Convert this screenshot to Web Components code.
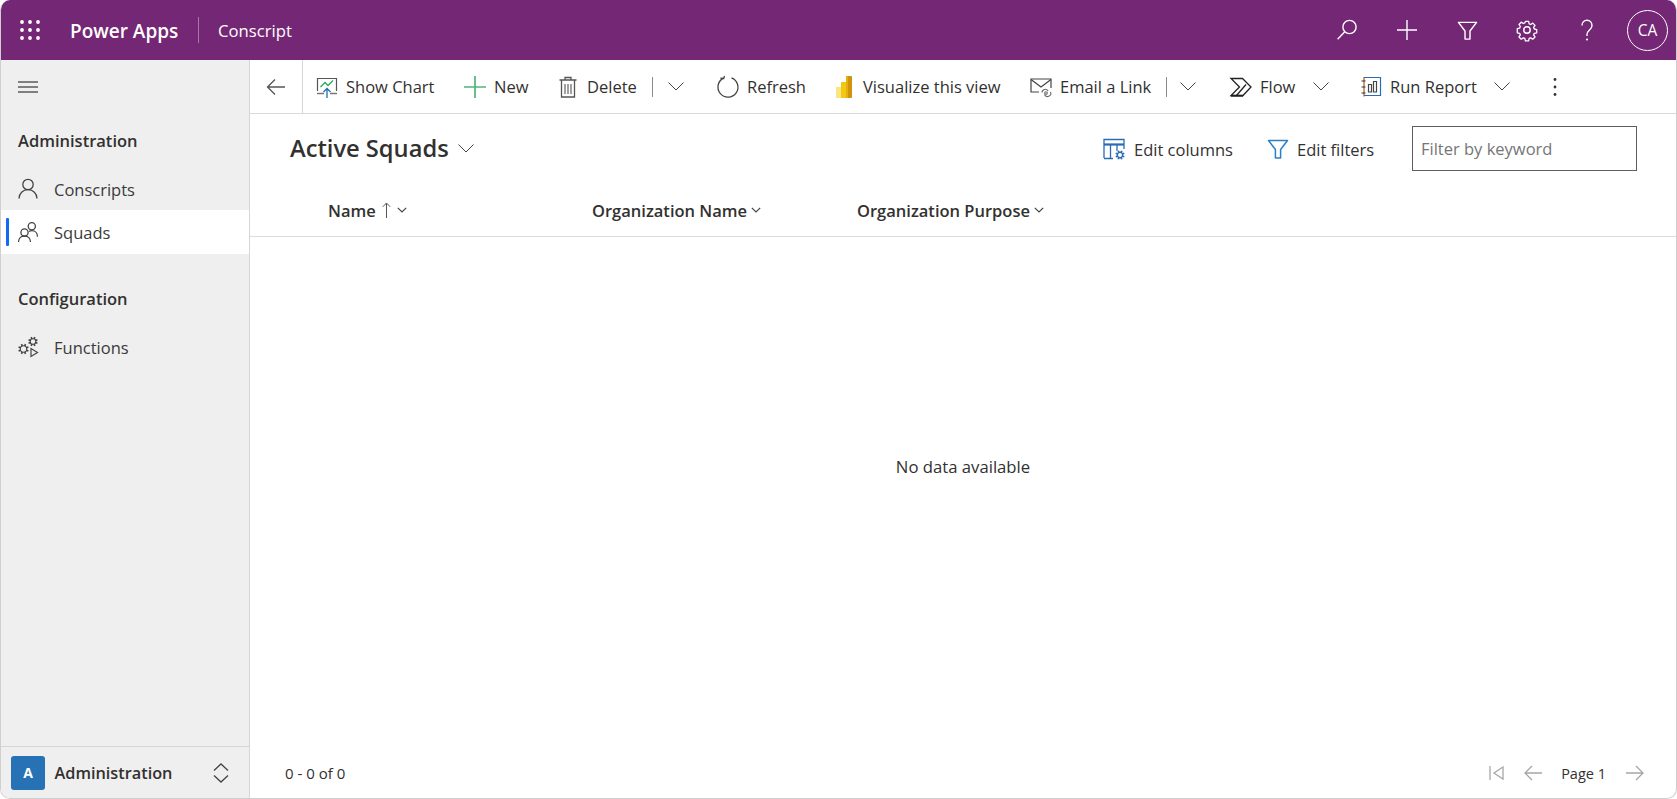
<!DOCTYPE html>
<html lang="en"><head><meta charset="utf-8"><title>Power Apps</title>
<style>
html,body{margin:0;padding:0;background:#fff;height:100%;overflow:hidden}
body{font-family:"Open Sans","Noto Sans",sans-serif;color:#323130}
</style></head><body>
<app-shell>
  <top-bar slot="top" brand="Power Apps" app="Conscript"></top-bar>
  <side-nav slot="side">
    <nav-group label="Administration" style="--gap-top:18px">
      <nav-item icon="person">Conscripts</nav-item>
      <nav-item icon="people" active>Squads</nav-item>
    </nav-group>
    <nav-group label="Configuration" style="--gap-top:34px">
      <nav-item icon="functions">Functions</nav-item>
    </nav-group>
  </side-nav>
  <cmd-bar slot="main">
    <cmd-btn icon="chart" w="149" pl="13">Show Chart</cmd-btn>
    <cmd-btn icon="plus" w="93">New</cmd-btn>
    <cmd-btn icon="trash" w="160" split="32" pr="21">Delete</cmd-btn>
    <cmd-btn icon="refresh" w="116">Refresh</cmd-btn>
    <cmd-btn icon="powerbi" w="197">Visualize this view</cmd-btn>
    <cmd-btn icon="email" w="200" split="30" pr="22">Email a Link</cmd-btn>
    <cmd-btn icon="flow" w="130" chev pr="19">Flow</cmd-btn>
    <cmd-btn icon="report" w="182" chev pr="20">Run Report</cmd-btn>
    <cmd-btn icon="dots" w="50" pl="14"></cmd-btn>
  </cmd-bar>
  <view-header slot="main" title="Active Squads"></view-header>
  <grid-head slot="main">
    <col-head w="264" sort>Name</col-head>
    <col-head w="265">Organization Name</col-head>
    <col-head w="260">Organization Purpose</col-head>
  </grid-head>
  <grid-body slot="main">No data available</grid-body>
  <grid-foot slot="main" range="0 - 0 of 0" page="Page 1"></grid-foot>
</app-shell>
<script>
function gear(cx,cy,r,R,n,sw){
  let t='';for(let i=0;i<n;i++){const a=(i+.5)*2*Math.PI/n,c=Math.cos(a),s=Math.sin(a);
    t+=`M${(cx+r*c).toFixed(2)} ${(cy+r*s).toFixed(2)}L${(cx+R*c).toFixed(2)} ${(cy+R*s).toFixed(2)}`}
  return `<circle cx="${cx}" cy="${cy}" r="${r}" fill="none" stroke="currentColor" stroke-width="${sw}"/><path d="${t}" stroke="currentColor" stroke-width="${sw*1.5}" fill="none"/>`;
}
const ICONS={
waffle:[20,20,'<g fill="currentColor">'+[2,10,18].flatMap(y=>[2,10,18].map(x=>`<circle cx="${x}" cy="${y}" r="1.9"/>`)).join('')+'</g>'],
search:[22,22,'<g fill="none" stroke="currentColor" stroke-width="1.4"><circle cx="13.5" cy="8" r="6.6"/><path d="M8.8 12.8 1.6 20.2"/></g>'],
add:[22,22,'<path d="M11 1v20M1 11h20" stroke="currentColor" stroke-width="1.4" fill="none"/>'],
funnel:[22,22,'<path d="M1.5 2.5h19L13.6 11.5v8.5H8.4v-8.5z" fill="none" stroke="currentColor" stroke-width="1.5" stroke-linejoin="round"/>'],
gear:[22,22,'<g fill="none" stroke="currentColor" stroke-width="1.45" stroke-linejoin="round"><circle cx="11" cy="11" r="3.2"/><path d="M9.2 1.5h3.6l.6 2.7 1.7.7 2.3-1.5 2.5 2.5-1.5 2.3.7 1.7 2.7.6v3.6l-2.7.6-.7 1.7 1.5 2.3-2.5 2.5-2.3-1.5-1.7.7-.6 2.7H9.2l-.6-2.7-1.7-.7-2.3 1.5-2.5-2.5 1.5-2.3-.7-1.7-2.7-.6V9.400l2.700-.6.7-1.700-1.500-2.300 2.500-2.500 2.300 1.500 1.700-.7z" transform="translate(1.1 1.1) scale(.9)"/></g>'],
help:[22,22,'<g fill="none" stroke="currentColor" stroke-width="1.4"><path d="M6 6.500C6 3.500 8.200 1.200 11 1.200s5 2.300 5 5.300c0 4.500-5 4.500-5 9v1.500"/></g><circle cx="11" cy="20.500" r="1.100" fill="currentColor"/>'],
menu:[20,12,'<path d="M0 1h20M0 6h20M0 11h20" stroke="#111" stroke-width="1"/>'],
back:[20,20,'<path d="M19 10H1.500M9 2.500 1.500 10 9 17.500" fill="none" stroke="#555" stroke-width="1.300"/>'],
chart:[22,22,'<path d="M1.500 15V2.500h19V15" fill="none" stroke="#555" stroke-width="1.200"/><path d="M1 17.500h7M14 17.500h7" stroke="#777" stroke-width="1.600"/><path d="M4.500 11 9 6.500l3 3 5-5" fill="none" stroke="#2fa55a" stroke-width="1.300"/><path d="M11 22v-9M7.500 16 11 12.500l3.500 3.500" fill="none" stroke="#1f6fb5" stroke-width="1.300"/>'],
plus:[22,22,'<path d="M11 0v22M0 11h22" stroke="#4fb57b" stroke-width="1.700"/>'],
trash:[22,22,'<g fill="none" stroke="#555" stroke-width="1.300"><path d="M4.500 4.500V21h13V4.500M2.500 4h17M8 4V1.500h6V4"/><path d="M8 8v10M11 8v10M14 8v10" stroke-width="1.100"/></g>'],
refresh:[22,22,'<g fill="none" stroke="#444" stroke-width="1.300"><path d="M14.500 1.800a10 10 0 1 1-8 .4"/><path d="M7.500 0l-.8 2.500-3.300-.3"/></g>'],
powerbi:[22,22,'<rect x="3" y="11" width="6" height="11" fill="#f9e583"/><rect x="8" y="6" width="6" height="16" fill="#f2c811"/><rect x="13" y="0" width="6" height="22" rx="1" fill="#d1930c"/><rect x="13" y="0" width="2" height="22" fill="#e8ae16"/>'],
email:[22,22,'<g fill="none" stroke="#444" stroke-width="1.200"><path d="M9 16H1V3h20v9"/><path d="M1 3.500l10 7.500 10-7.500"/></g><g fill="none" stroke="#666" stroke-width="1.100"><path d="M12 16.500a3.200 3.200 0 0 1 6-1.500"/><path d="M20.500 16a3.200 3.200 0 0 1-6 2.500"/><circle cx="16" cy="17" r="1.300"/></g>'],
flow:[22,22,'<g fill="none" stroke="#222" stroke-width="1.300" stroke-linejoin="miter"><path d="M1 2.500h11.500l8.500 8.500-8 8.500H1L9.500 11z"/><path d="M6.500 19.500 16 8.500"/></g><path d="M1 19.800h12" stroke="#222" stroke-width="1.800"/>'],
report:[22,22,'<path d="M4 1.500h16.500v18H4" fill="none" stroke="#2a6cb4" stroke-width="1.200"/><path d="M4 1v19.500" stroke="#a85a24" stroke-width="1.200"/><path d="M1.500 5h4M1.500 11h4M1.500 17h4" stroke="#333" stroke-width="1.200"/><path d="M8.500 8.500h3V16h-3zM13.500 5.500h3V16h-3z" fill="none" stroke="#444" stroke-width="1.200"/>'],
dots:[22,22,'<g fill="#333"><circle cx="11" cy="3.500" r="1.400"/><circle cx="11" cy="11" r="1.400"/><circle cx="11" cy="18.500" r="1.400"/></g>'],
cols:[22,22,'<g fill="none" stroke="#2a6cb4" stroke-width="1.300"><path d="M1 20V1.500h20V11"/><path d="M1 6.500h20" stroke-width="2.200"/><path d="M7.500 6.500V20M14 6.500V13M1 20.500h9"/></g><g color="#2a6cb4">'+gear(17,17,2.6,4.6,8,1.2)+'</g>'],
funnelblue:[22,22,'<path d="M1.500 2.500h19L13.600 11.500v8.500H8.400v-8.500z" fill="none" stroke="#2d7fc4" stroke-width="1.500" stroke-linejoin="round"/>'],
person:[22,22,'<g fill="none" stroke="#444" stroke-width="1.300"><circle cx="11" cy="6.500" r="5.200"/><path d="M2 20.500c0-5 4-8.800 9-8.800s9 3.800 9 8.800"/></g>'],
people:[22,22,'<g fill="none" stroke="#444" stroke-width="1.300"><circle cx="7.500" cy="11.500" r="3.600"/><path d="M1.500 21c0-3.500 2.500-6 6-6s6 2.500 6 6"/><circle cx="14.800" cy="5.200" r="3.600"/><path d="M12 10.600c.9-.7 1.800-.9 2.800-.9 3.500 0 5.700 2.500 5.700 6"/></g>'],
functions:[22,22,'<g color="#444">'+gear(6.5,13,3.2,5.3,8,1.1)+gear(16,5.5,2.8,4.8,8,1.1)+'</g><path d="M14 12.500v8l6.500-4z" fill="none" stroke="#444" stroke-width="1.200"/>'],
updown:[18,22,'<path d="M2 8.500 9 2l7 6.500M2 13.500 9 20l7-6.500" fill="none" stroke="#444" stroke-width="1.300"/>'],
chev:[16,9,'<path d="M.5 .5 8 8 15.500 .5" fill="none" stroke="#444" stroke-width="1"/>'],
chevsm:[10,6,'<path d="M.8 .8 5 5 9.200 .8" fill="none" stroke="#444" stroke-width="1.200"/>'],
sortup:[9,16,'<path d="M4.500 16V1M.8 4.800 4.500 1l3.700 3.800" fill="none" stroke="#555" stroke-width="1"/>'],
first:[15,14,'<path d="M1 0v14M14 1 5 7l9 6z" fill="none" stroke="#a6a6a6" stroke-width="1.300"/>'],
prev:[18,16,'<path d="M18 8H1M8 1 1 8l7 7" fill="none" stroke="#a6a6a6" stroke-width="1.300"/>'],
next:[18,16,'<path d="M0 8h17M10 1l7 7-7 7" fill="none" stroke="#a6a6a6" stroke-width="1.300"/>'],
};
function shadow(el,html){const s=el.shadowRoot||el.attachShadow({mode:'open'});s.innerHTML=html;return s}
class PaIcon extends HTMLElement{connectedCallback(){
  const [w,h,b]=ICONS[this.getAttribute('name')];const sc=+(this.getAttribute('size')||0);
  const W=sc||w,H=sc?sc*h/w:h;
  shadow(this,`<style>:host{display:inline-flex;align-items:center;justify-content:center;flex:none;line-height:0}svg{display:block;overflow:visible}</style><svg width="${W}" height="${H}" viewBox="0 0 ${w} ${h}" aria-hidden="true">${b}</svg>`)}}
customElements.define('pa-icon',PaIcon);

class AppShell extends HTMLElement{connectedCallback(){shadow(this,`<style>
:host{display:grid;grid-template-columns:249px 1fr;grid-template-rows:60px 1fr;width:1677px;height:799px;box-sizing:border-box;border:1px solid #cfcfcf;border-top:0;border-radius:10px;overflow:hidden;background:#fff}
::slotted([slot=top]){grid-column:1/3}
.main{display:flex;flex-direction:column;min-width:0;min-height:0}
</style><slot name="top"></slot><slot name="side"></slot><div class="main"><slot name="main"></slot></div>`)}}
class TopBar extends HTMLElement{connectedCallback(){shadow(this,`<style>
:host{display:flex;align-items:center;height:60px;margin-right:-1px;margin-left:-1px;background:#742774;color:#fff;padding-left:20px;box-sizing:border-box}
.brand{margin:2px 0 0 30px;font-size:19px;font-weight:600;width:129px;white-space:nowrap}
.app{border-left:1px solid #a57ba5;height:26px;line-height:28px;padding-left:19px;font-size:16.700px;margin-left:-1px;flex:1}
.act{width:60px;display:flex;justify-content:center}
.avatar{width:41px;height:41px;margin:0 9px 0 10px;border:1px solid #fff;border-radius:50%;box-sizing:border-box;display:flex;align-items:center;justify-content:center;font-size:15.500px}
</style><pa-icon name="waffle"></pa-icon><span class="brand">${this.getAttribute('brand')}</span><span class="app">${this.getAttribute('app')}</span>
<span class="act"><pa-icon name="search"></pa-icon></span><span class="act"><pa-icon name="add"></pa-icon></span><span class="act"><pa-icon name="funnel" size="21"></pa-icon></span><span class="act"><pa-icon name="gear" size="22"></pa-icon></span><span class="act"><pa-icon name="help" size="22"></pa-icon></span><span class="avatar">CA</span>`)}}
class SideNav extends HTMLElement{connectedCallback(){shadow(this,`<style>
:host{display:flex;flex-direction:column;background:#efefef;border-right:1px solid #d6d6d6;box-sizing:border-box;min-height:0}
.burger{height:52px;display:flex;align-items:center;padding:1px 0 0 17px;flex:none;box-sizing:border-box}
.list{flex:1}
.sw{height:52px;border-top:1px solid #d6d6d6;display:flex;align-items:center;padding:0 19px 0 10px;flex:none;box-sizing:border-box}
.tile{width:34px;height:34px;border-radius:3px;background:#2672b5;color:#fff;display:flex;align-items:center;justify-content:center;font-size:14px;font-weight:700;flex:none}
.name{flex:1;margin-left:9.500px;font-size:16.300px;font-weight:600;white-space:nowrap}
</style><div class="burger"><pa-icon name="menu"></pa-icon></div><div class="list"><slot></slot></div>
<div class="sw"><span class="tile">A</span><span class="name">Administration</span><pa-icon name="updown"></pa-icon></div>`)}}
class NavGroup extends HTMLElement{connectedCallback(){shadow(this,`<style>
:host{display:block;padding-top:var(--gap-top,0)}
h2{margin:0 0 18px;padding-left:17px;font-size:16.500px;font-weight:600;line-height:22px;color:#323130}
</style><h2>${this.getAttribute('label')}</h2><slot></slot>`)}}
class NavItem extends HTMLElement{connectedCallback(){shadow(this,`<style>
:host{display:flex;align-items:center;height:${this.hasAttribute('active')?44:40}px;padding:0 0 ${this.hasAttribute('active')?0:2}px 16px;font-size:16.500px;position:relative;color:#3b3a39;box-sizing:border-box}
:host([active]){background:#fff}
:host([active])::before{content:"";position:absolute;left:5px;top:8px;bottom:8px;width:3px;border-radius:1px;background:#0f6cf2}
.t{margin-left:15px}
</style><pa-icon name="${this.getAttribute('icon')}"></pa-icon><span class="t"><slot></slot></span>`)}}
class CmdBar extends HTMLElement{connectedCallback(){shadow(this,`<style>
:host{display:flex;align-items:center;height:53px;flex:none;border-bottom:1px solid #d9d9d9;box-sizing:content-box}
.back{width:53px;height:53px;border-right:1px solid #d6d6d6;display:flex;align-items:center;justify-content:center;box-sizing:border-box;flex:none}
</style><div class="back"><pa-icon name="back"></pa-icon></div><slot></slot>`)}}
class CmdBtn extends HTMLElement{connectedCallback(){
  const a=n=>this.getAttribute(n),split=a('split'),chev=this.hasAttribute('chev');
  shadow(this,`<style>
:host{display:flex;align-items:center;height:53px;width:${a('w')}px;flex:none;box-sizing:border-box;padding-left:${a('pl')||12}px;padding-right:${a('pr')||0}px;font-size:16.500px;color:#323130;white-space:nowrap}
.ic{margin-right:8px}
.tail{margin-left:auto;display:flex;align-items:center;justify-content:space-between}
.sep{width:1px;height:20px;background:#8a8a8a;flex:none}
</style><pa-icon class="ic" name="${a('icon')}"></pa-icon><span><slot></slot></span>
${split?`<span class="tail" style="width:${split}px"><span class="sep"></span><pa-icon name="chev"></pa-icon></span>`:''}${chev?`<span class="tail"><pa-icon name="chev"></pa-icon></span>`:''}`)}}
class ViewHeader extends HTMLElement{connectedCallback(){shadow(this,`<style>
:host{display:flex;align-items:center;height:74px;flex:none;padding:0 39px 4px 40px;box-sizing:border-box;color:#323130}
.title{font-size:23.700px;font-weight:600;white-space:nowrap;margin-top:-2px}
.dd{margin-left:9px;margin-top:-1px}
.sp{flex:1}
.act{display:flex;align-items:center;font-size:16.500px;white-space:nowrap}
.act pa-icon{margin-right:8px}
.a1{width:164px}
.a1 pa-icon{margin-right:9px}
.a2{width:145px}
.kw{width:225px;height:45px;box-sizing:border-box;border:1px solid #605e5c;padding-left:8px;display:flex;align-items:center;font-size:16.500px;color:#767676;margin-top:-1px;font-family:inherit;background:#fff}
</style><span class="title">${this.getAttribute('title')}</span><pa-icon class="dd" name="chev"></pa-icon><span class="sp"></span>
<span class="act a1"><pa-icon name="cols"></pa-icon>Edit columns</span><span class="act a2"><pa-icon name="funnelblue"></pa-icon>Edit filters</span><span class="kw">Filter by keyword</span>`)}}
class GridHead extends HTMLElement{connectedCallback(){shadow(this,`<style>
:host{display:flex;align-items:center;height:49px;flex:none;padding:0 0 4px 78px;border-bottom:1px solid #dcdcdc;box-sizing:border-box}
</style><slot></slot>`)}}
class ColHead extends HTMLElement{connectedCallback(){shadow(this,`<style>
:host{display:flex;align-items:center;width:${this.getAttribute('w')}px;flex:none;font-size:16.500px;font-weight:600;white-space:nowrap;color:#323130}
.s{margin-left:6px}.c{margin-left:4px}
</style><span><slot></slot></span>${this.hasAttribute('sort')?'<pa-icon class="s" name="sortup"></pa-icon><pa-icon class="c" style="margin-left:6px" name="chevsm"></pa-icon>':'<pa-icon class="c" name="chevsm"></pa-icon>'}`)}}
class GridBody extends HTMLElement{connectedCallback(){shadow(this,`<style>
:host{display:flex;flex:1;align-items:center;justify-content:center;font-size:16.700px;color:#323130;min-height:0}
</style><slot></slot>`)}}
class GridFoot extends HTMLElement{connectedCallback(){shadow(this,`<style>
:host{display:flex;align-items:center;height:103px;flex:none;padding:53px 32px 0 35px;box-sizing:border-box;font-size:15px;color:#323130}
.r{flex:1}
.pg{margin:0 20px 0 19px;font-size:14.500px}
.f{margin-right:20px}
</style><span class="r">${this.getAttribute('range')}</span><pa-icon class="f" name="first"></pa-icon><pa-icon name="prev"></pa-icon><span class="pg">${this.getAttribute('page')}</span><pa-icon name="next"></pa-icon>`)}}
[['app-shell',AppShell],['top-bar',TopBar],['side-nav',SideNav],['nav-group',NavGroup],['nav-item',NavItem],['cmd-bar',CmdBar],['cmd-btn',CmdBtn],['view-header',ViewHeader],['grid-head',GridHead],['col-head',ColHead],['grid-body',GridBody],['grid-foot',GridFoot]].forEach(([n,c])=>customElements.define(n,c));
</script>
</body></html>
